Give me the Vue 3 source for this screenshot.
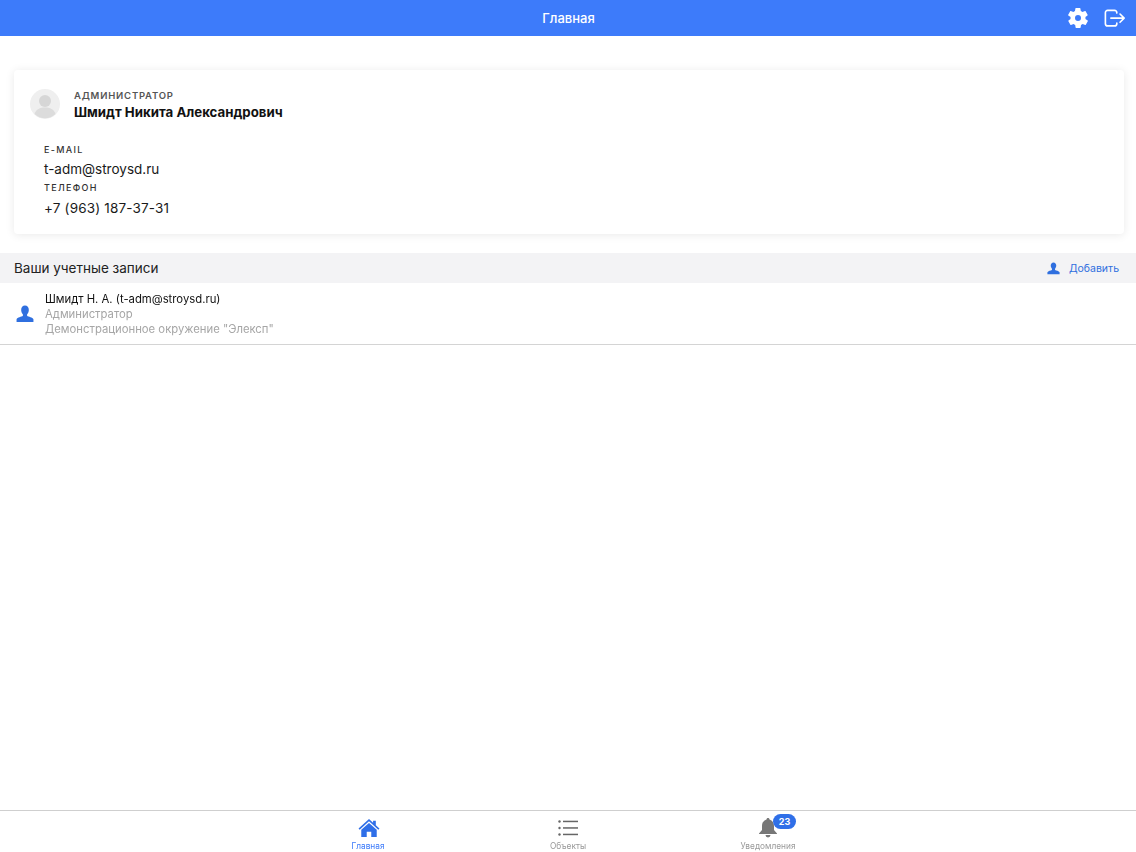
<script setup>
const tabs = [
  { label: 'Главная', icon: 'home', active: true },
  { label: 'Объекты', icon: 'list' },
  { label: 'Уведомления', icon: 'bell', badge: 23 },
]
</script>

<template>
  <div class="page">
    <header class="top">
      <span class="title">Главная</span>
      <div class="actions">
        <svg class="gear" viewBox="0 0 24 24" width="24" height="24"><path fill="#fff" d="M19.4 13c.1-.3.1-.7.1-1s0-.7-.1-1l2.1-1.6c.2-.2.2-.4.1-.6l-2-3.5c-.1-.2-.4-.3-.6-.2l-2.500 1c-.5-.4-1.100-.7-1.700-1l-.4-2.600c0-.3-.2-.5-.5-.5h-4c-.3 0-.5.2-.5.4l-.4 2.700c-.6.2-1.200.6-1.700 1l-2.500-1c-.2-.1-.5 0-.6.2l-2 3.500c-.1.2-.1.500.1.600L4.600 11c0 .3-.1.7-.1 1s0 .7.1 1l-2.100 1.600c-.2.2-.2.4-.1.6l2 3.500c.1.2.4.3.6.2l2.500-1c.5.4 1.100.7 1.700 1l.4 2.600c0 .3.2.5.5.5h4c.3 0 .5-.2.5-.4l.4-2.700c.6-.2 1.200-.6 1.700-1l2.500 1c.2.1.5 0 .6-.2l2-3.500c.1-.2.1-.5-.1-.6zM12 15a3 3 0 1 1 0-6 3 3 0 0 1 0 6z"/></svg>
        <svg class="exit" viewBox="0 0 24 20" width="22" height="18.300" fill="none" stroke="#fff" stroke-width="1.800" stroke-linecap="round" stroke-linejoin="round"><path d="M14 4.500V4a2.500 2.500 0 0 0-2.500-2.500H4A2.500 2.500 0 0 0 1.500 4v12A2.500 2.500 0 0 0 4 18.500h7.500A2.500 2.500 0 0 0 14 16v-.5"/><path d="M7.500 10h14M17.500 5.500l4.500 4.500-4.500 4.500"/></svg>
      </div>
    </header>

    <main class="main">
      <section class="card">
        <div class="who">
          <svg class="avatar" viewBox="0 0 30 30" width="30" height="30"><circle cx="15" cy="15" r="15" fill="#efefef"/><circle cx="15" cy="12" r="6" fill="#d6d6d6"/><path d="M4.500 25c1.500-5 5.500-6.500 10.500-6.500S24 20 25.500 25a15 15 0 0 1-21 0z" fill="#dcdcdc"/></svg>
          <div class="who-text">
            <div class="role">АДМИНИСТРАТОР</div>
            <div class="name">Шмидт Никита Александрович</div>
          </div>
        </div>
        <div class="fields">
          <div class="flabel">E-MAIL</div>
          <div class="fvalue">t-adm@stroysd.ru</div>
          <div class="flabel">ТЕЛЕФОН</div>
          <div class="fvalue phone">+7 (963) 187-37-31</div>
        </div>
      </section>

      <div class="section-head">
        <span>Ваши учетные записи</span>
        <span class="add">
          <svg viewBox="0 0 16 16" width="13" height="13"><path fill="#2f6fdf" d="M8 .5c2.100 0 3.400 1.600 3.400 3.900 0 1.600-.7 3-1.500 3.900v1.500c1.300.7 4.800 1 5.600 2.900V15H.5v-2.300c.8-1.900 4.300-2.200 5.600-2.900V8.300C5.300 7.400 4.600 6 4.600 4.400 4.600 2.100 5.900.5 8 .5z"/></svg>
          Добавить
        </span>
      </div>

      <div class="account">
        <svg viewBox="0 0 16 16" width="18" height="18"><path fill="#2f6fdf" d="M8 .5c2.100 0 3.400 1.600 3.400 3.900 0 1.600-.7 3-1.500 3.900v1.500c1.300.7 4.800 1 5.600 2.900V15H.5v-2.300c.8-1.900 4.300-2.200 5.600-2.900V8.300C5.300 7.400 4.600 6 4.600 4.400 4.600 2.100 5.900.5 8 .5z"/></svg>
        <div class="acc-text">
          <div class="acc-name">Шмидт Н. А. (t-adm@stroysd.ru)</div>
          <div class="acc-sub">Администратор</div>
          <div class="acc-sub">Демонстрационное окружение "Элексп"</div>
        </div>
      </div>
    </main>

    <nav class="tabs">
      <div v-for="t in tabs" :key="t.label" class="tab" :class="{ active: t.active }">
        <div class="tab-icon">
          <svg v-if="t.icon === 'home'" class="home" viewBox="0 0 24 22" width="22" height="20"><path fill="#2f6fe8" d="M12 1 0.500 11.500l1.200 1.300L12 3.500l10.300 9.300 1.200-1.300-4-3.600V3h-3v2.200z"/><path fill="#2f6fe8" d="M12 5.500 3.500 13v8h6v-6h5v6h6v-8z"/></svg>
          <svg v-else-if="t.icon === 'list'" viewBox="0 0 20 18" width="20" height="18" fill="#666"><circle cx="1.500" cy="2.500" r="1.200"/><circle cx="1.500" cy="9" r="1.200"/><circle cx="1.500" cy="15.500" r="1.200"/><rect x="5" y="1.700" width="15" height="1.500"/><rect x="5" y="8.200" width="15" height="1.500"/><rect x="5" y="14.700" width="15" height="1.500"/></svg>
          <svg v-else viewBox="0 0 18 20" width="18" height="20"><path fill="#777" d="M9 0c1 0 1.500.7 1.500 1.500C13.500 2.200 15 5 15 8v4l3 3.500V16H0v-.5L3 12V8c0-3 1.500-5.800 4.500-6.500C7.500.7 8 0 9 0z"/><path fill="#777" d="M6.500 17h5a2.500 2.500 0 0 1-5 0z"/></svg>
          <span v-if="t.badge" class="badge">{{ t.badge }}</span>
        </div>
        <div class="tab-label">{{ t.label }}</div>
      </div>
    </nav>
  </div>
</template>

<style scoped>
.page {
  width: 1136px;
  height: 852px;
  display: flex;
  flex-direction: column;
  background: #fff;
  font-family: Inter, "Liberation Sans", sans-serif;
  color: #111;
  overflow: hidden;
}
.top {
  height: 36px;
  flex: none;
  background: #3d7bfa;
  display: flex;
  align-items: center;
  justify-content: center;
  position: relative;
  color: #fff;
}
.title {
  font-size: 13px;
  font-weight: 500;
  margin: -1px 0 0 1px;
}
.actions {
  position: absolute;
  right: 10px;
  top: 6px;
  display: flex;
  align-items: center;
  gap: 14px;
}
.exit {
  margin-top: 1px;
}
.main {
  flex: 1;
  padding-top: 34px;
}
.card {
  margin: 0 12px 0 14px;
  height: 164px;
  box-sizing: border-box;
  padding: 18px 16px 0;
  border-radius: 4px;
  box-shadow: 0 1px 10px rgba(0, 0, 0, 0.09);
}
.who {
  display: flex;
  gap: 14px;
  align-items: flex-start;
}
.avatar {
  margin-top: 1px;
}
.who-text {
  padding-top: 2px;
}
.role {
  font-size: 9.500px;
  font-weight: 600;
  letter-spacing: 0.800px;
  color: #555;
  line-height: 12px;
}
.name {
  font-size: 13.250px;
  font-weight: 700;
  line-height: 20px;
  color: #111;
}
.fields {
  padding: 22px 0 0 14px;
}
.flabel {
  font-size: 9px;
  font-weight: 500;
  letter-spacing: 1.300px;
  line-height: 12px;
  color: #333;
}
.fvalue {
  font-size: 13.500px;
  line-height: 26px;
  color: #1a1a1a;
}
.phone {
  margin-top: 1px;
  letter-spacing: 0.170px;
}
.section-head {
  margin-top: 19px;
  height: 30px;
  background: #f3f3f5;
  display: flex;
  align-items: center;
  justify-content: space-between;
  padding: 0 17px 0 14px;
  font-size: 13.500px;
  color: #222;
}
.add {
  display: flex;
  align-items: center;
  gap: 9px;
  font-size: 10.500px;
  color: #2f6fdf;
}
.account {
  height: 62px;
  box-sizing: border-box;
  border-bottom: 1px solid #d4d4d4;
  display: flex;
  align-items: center;
  gap: 11px;
  padding-left: 16px;
}
.acc-text {
  filter: blur(0.3px);
  padding-top: 2px;
}
.acc-name {
  font-size: 11.300px;
  line-height: 15px;
  color: #111;
}
.acc-sub {
  font-size: 11.300px;
  line-height: 15px;
  color: #a6a6a6;
}
.tabs {
  flex: none;
  height: 41px;
  border-top: 1px solid #cfcfcf;
  display: flex;
  justify-content: center;
}
.tab {
  width: 200px;
  display: flex;
  flex-direction: column;
  align-items: center;
  padding-top: 5px;
  color: #999;
}
.tab.active {
  color: #3d7bfa;
}
.tab-icon {
  position: relative;
  height: 23px;
  display: flex;
  align-items: center;
}
.home {
  margin-left: 1px;
}
.badge {
  position: absolute;
  left: 14px;
  top: -2px;
  min-width: 23px;
  height: 15px;
  border-radius: 8px;
  background: #2f6fe8;
  color: #fff;
  font-size: 9px;
  font-weight: 700;
  line-height: 15px;
  text-align: center;
}
.tab-label {
  font-size: 8.300px;
  line-height: 10px;
  margin-top: 2px;
  filter: blur(0.5px);
}
</style>
